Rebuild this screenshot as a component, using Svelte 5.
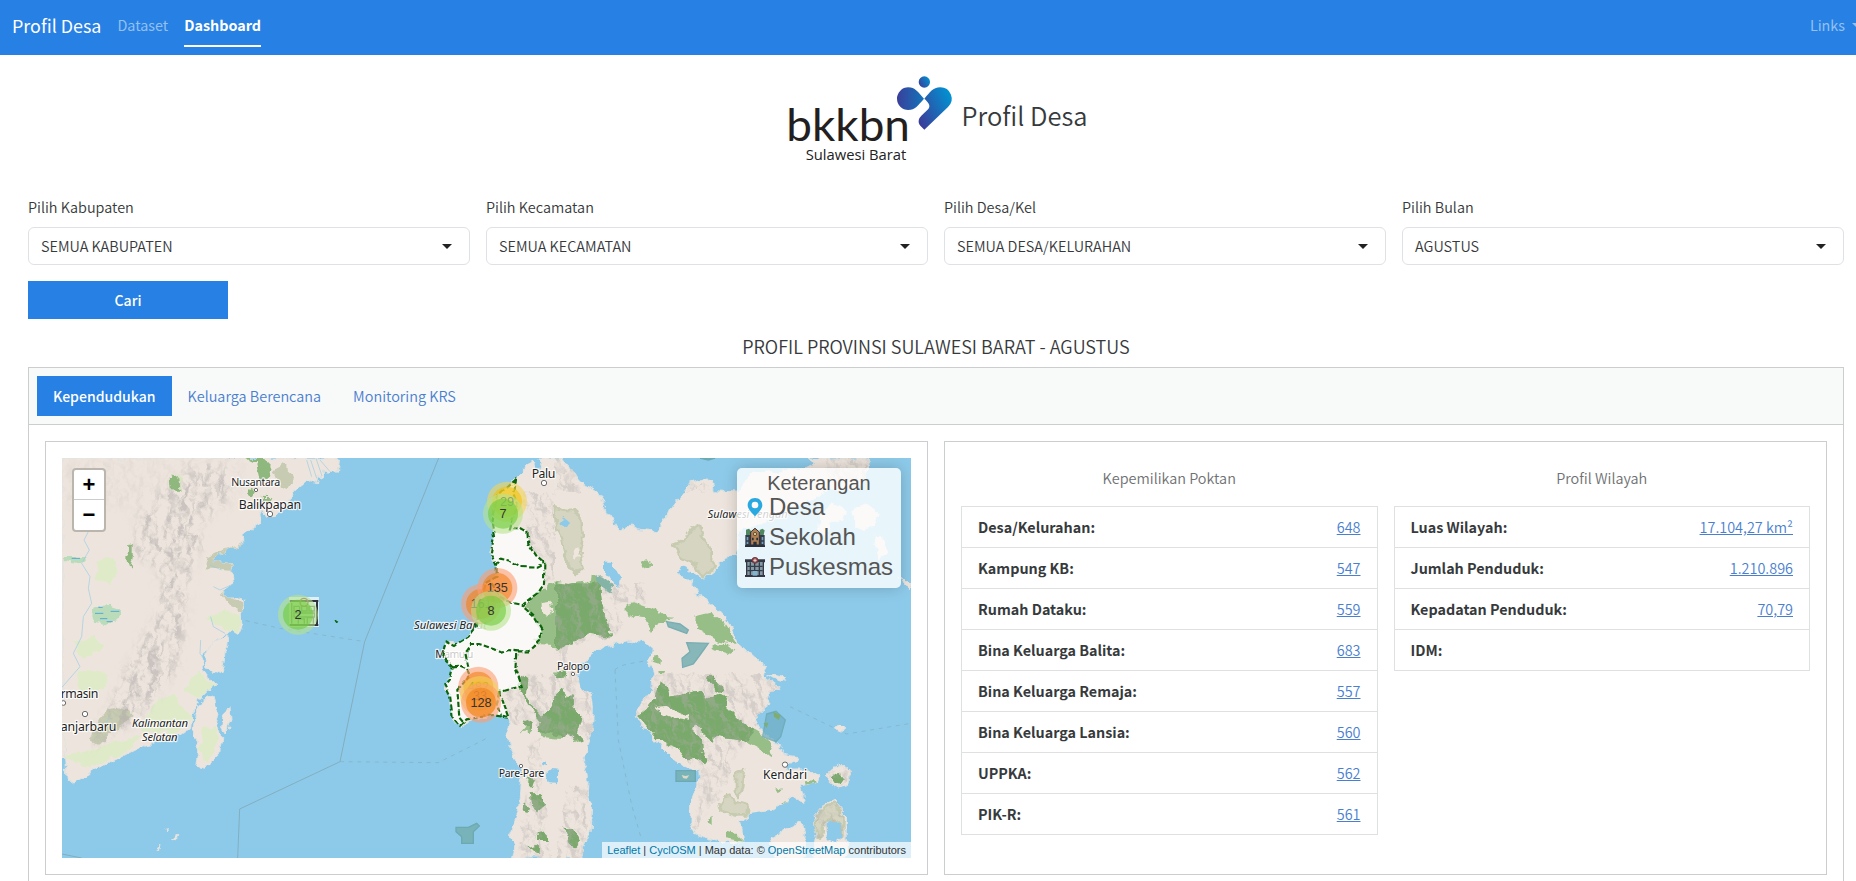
<script>
  const filters = [
    ['Pilih Kabupaten', 'SEMUA KABUPATEN'],
    ['Pilih Kecamatan', 'SEMUA KECAMATAN'],
    ['Pilih Desa/Kel', 'SEMUA DESA/KELURAHAN'],
    ['Pilih Bulan', 'AGUSTUS']
  ];
  const tables = [
    { title: 'Kepemilikan Poktan', rows: [['Desa/Kelurahan:', '648'], ['Kampung KB:', '547'], ['Rumah Dataku:', '559'], ['Bina Keluarga Balita:', '683'], ['Bina Keluarga Remaja:', '557'], ['Bina Keluarga Lansia:', '560'], ['UPPKA:', '562'], ['PIK-R:', '561']] },
    { title: 'Profil Wilayah', rows: [['Luas Wilayah:', '17.104,27 km²'], ['Jumlah Penduduk:', '1.210.896'], ['Kepadatan Penduduk:', '70,79'], ['IDM:', '']] }
  ];
  const colors = {
    s: ['rgb(181,226,140)', 'rgb(110,204,57)'],
    m: ['rgb(241,211,87)', 'rgb(240,194,12)'],
    l: ['rgb(253,156,115)', 'rgb(241,128,23)']
  };
  // x, y, count, size class, text opacity
  const clusters = [
    [774, 524, 2, 's', 1],
    [1401, 185, 29, 'm', 0.9], [1389, 221, 7, 's', 1],
    [1323, 492, 161, 'l', 0.8], [1372, 444, 135, 'l', 1], [1353, 512, 8, 's', 1],
    [1315, 740, 482, 'l', 0.8], [1320, 768, 33, 'm', 0.8], [1323, 788, 128, 'l', 1]
  ];
  const kalimantan = 'M66 54H895L893 94 872 90 866 100 850 96 848 116 833 110 830 128 815 122 800 125 770 150 752 172 730 205 704 228 680 232 668 214 660 234 662 250 625 270 603 285 606 314 560 330 520 356 512 366 545 366 578 372 575 390 580 432 545 455 553 468 598 468 617 484 614 512 604 522 606 560 596 583 580 572 552 580 526 602 512 625 486 652 495 676 484 690 500 700 506 716 527 733 508 748 480 776 474 800 456 822 452 866 410 884 350 905 300 922 215 965 160 994 105 1022 82 1025 76 940 66 868Z';
  const kalIslands = 'M558 585L566 600 555 640 548 690 522 706 500 682 498 645 520 605ZM522 765L532 812 524 850 545 892 538 945 505 975 484 991 470 985 476 930 458 872 466 824 490 780ZM570 800L573 842 556 880 545 862 550 820ZM394 1197L410 1186 414 1192 402 1203ZM378 1168L386 1166 380 1173ZM356 1230L366 1222 362 1232Z';
  const sulawesi = 'M395 62L402 68 406 85 418 92 422 78 414 54H486L508 84 530 120 560 136 592 156 610 184 630 225 655 267 690 258 715 266 770 275 790 248 806 212 838 172 870 130 905 118 932 122 940 152 1010 156 1060 100 1220 85 1250 70 1220 54H1400L1410 90 1380 140 1290 150 1210 190 1120 235 1020 275 1010 345 980 348 950 382 935 408 900 412 870 396 842 375 832 398 876 425 886 440 892 472 922 480 962 517 1000 575 1015 610 1060 650 1098 678 1090 702 1115 722 1142 740 1124 756 1102 772 1110 792 1085 812 1070 840 1088 875 1112 900 1140 912 1152 944 1192 950 1185 965 1160 972 1168 990 1230 990 1258 1008 1250 1030 1200 1040 1215 1085 1195 1078 1180 1068 1160 1085 1120 1110 1055 1120 1022 1146 1032 1205 980 1208 925 1195 886 1180 870 1145 872 1095 886 1044 905 1020 902 990 850 982 812 950 784 922 752 878 728 860 706 824 730 780 755 750 760 700 745 660 758 630 735 608 680 600 610 620 562 655 530 684 540 745 575 762 580 800 578 870 562 910 552 960 565 1010 562 1060 575 1100 570 1180 550 1225 552 1254H338L345 1220 328 1184 356 1115 360 1030 370 1005 358 975 330 920 316 880 330 848 300 820 240 836 180 857 158 832 150 770 133 735 150 715 160 682 130 650 135 605 165 615 205 590 230 560 240 480 255 430 290 410 290 380 272 340 282 290 276 255 290 170 345 115Z';
  const sulIslands = 'M1300 982L1320 970 1355 1000 1345 1038 1318 1047 1290 1030 1272 1008ZM1302 1080L1340 1128 1338 1190 1346 1240 1320 1254H1240L1252 1190 1243 1130 1270 1095ZM1110 1195L1160 1165 1205 1145 1213 1170 1210 1254H1130ZM1300 870L1315 855 1335 862 1325 880ZM1260 220L1300 190 1340 210 1330 240 1290 250 1280 290 1255 280ZM1350 210L1400 195 1435 220 1420 260 1370 265ZM1420 290L1440 285 1465 340 1440 352ZM1500 405L1535 440 1525 455ZM1020 245L1030 240 1025 255ZM1100 700L1150 712 1160 724 1120 712Z';
  const province = 'M345 118L340 160 350 190 330 265 362 264 382 275 385 310 412 350 433 368 432 432 412 462 367 495 400 525 425 568 420 600 385 634 352 634 349 690 365 738 300 756 315 800 328 834 303 830 275 825 200 838 180 857 158 832 150 770 133 735 150 715 158 682 135 660 130 650 140 602 165 615 205 590 230 560 240 480 255 430 290 410 290 380 272 340 282 290 276 255 290 170Z';
  const borders = 'M290 380L300 356 330 362 360 378 410 380 433 368M275 430L300 470 330 488 367 495M205 680L196 640 215 612 240 612 265 620 285 628 305 638 325 630 352 634M158 682L180 680 205 690 212 705 190 730 172 750 178 830 195 850M300 756L290 790 303 830';
  const forests = 'M465 425L505 432 545 422 570 430 572 404 590 412 608 408 600 440 605 475 618 530 633 590 560 580 530 600 510 622 465 622 420 618 400 600 425 580 420 560 395 530 375 500 410 460ZM680 495L710 488 745 500 772 512 800 535 820 536 770 548 755 572 740 550 735 535 700 530 680 515ZM890 528L930 518 970 545 1013 612 985 608 950 600 925 585 888 565ZM935 610L980 612 1003 632 985 645 935 628ZM722 372L735 364 750 368 748 382 730 386ZM780 722L800 730 812 770 870 758 900 750 918 775 960 758 985 770 980 800 1030 850 1080 880 1118 920 1112 952 1085 930 1040 905 995 898 950 890 940 905 915 885 885 850 878 870 905 895 910 940 928 962 915 972 850 950 830 925 780 905 740 860 712 828 745 802 765 775ZM920 712L940 710 972 745 960 752 918 728ZM1212 1025L1240 1020 1258 1045 1250 1085 1228 1090 1215 1055ZM1295 1010L1310 998 1328 1012 1312 1034ZM365 705L385 720 380 760 400 800 425 830 455 800 470 765 490 745 500 780 518 760 520 800 545 830 530 880 545 900 520 910 510 880 480 900 430 895 410 870 420 850 395 800 370 760 355 735ZM370 835L395 850 390 875 362 880 378 860ZM455 695L505 690 500 712 470 715ZM395 1060L425 1060 435 1100 415 1115 400 1095ZM370 1090L390 1100 385 1115 368 1110ZM385 1010L405 1015 395 1045 380 1030ZM490 1160L520 1165 540 1200 520 1225 500 1190ZM410 1180L435 1175 440 1200 412 1200ZM385 1225L418 1215 415 1240ZM975 1175L1010 1182 1035 1205 975 1195ZM918 1150L935 1130 935 1158ZM760 645L780 650 778 672 758 665ZM772 690L792 690 790 700 774 700ZM1140 1090L1165 1085 1160 1100ZM1130 1045L1145 1045 1143 1053 1130 1056ZM1098 850L1110 848 1105 862ZM1120 820L1140 825 1135 838Z';
  const pale = 'M465 205L500 213 526 212 545 250 550 300 540 345 548 385 530 402 505 380 490 320 468 250ZM874 268L896 256 908 290 932 320 932 350 944 378 928 404 902 406 884 370 842 348 820 314 850 304ZM958 1093L985 1070 1010 1084 1046 1093 1042 1126 1000 1126 964 1113ZM1008 998L1032 988 1026 1040 1018 1071 1008 1060ZM1250 1130L1272 1102 1302 1090 1330 1130 1330 1180 1318 1150 1290 1132 1268 1158 1260 1196 1250 1180Z';
</script>

<nav>
  <span class="brand">Profil Desa</span>
  <span class="navlink">Dataset</span>
  <span class="navlink current">Dashboard</span>
  <span class="navlink links">Links <i class="caret"></i></span>
</nav>

<main>
  <header>
    <svg class="logo" width="170" height="90" viewBox="0 0 510 270">
      <defs>
        <linearGradient id="lg1" x1="0" x2="1"><stop offset="0" stop-color="#3a3f9b" /><stop offset="1" stop-color="#1274ba" /></linearGradient>
        <linearGradient id="lg2" x1="0" x2="1" y1=".8" y2=".2"><stop offset="0" stop-color="#3c3c98" /><stop offset="1" stop-color="#0093d3" /></linearGradient>
      </defs>
      <text x="4" y="204" class="wordmark" textLength="371" lengthAdjust="spacingAndGlyphs">bkkbn</text>
      <text x="62" y="260" class="region" textLength="302" lengthAdjust="spacingAndGlyphs">Sulawesi Barat</text>
      <circle cx="418" cy="27" r="17" fill="url(#lg2)" />
      <path d="M417 77C399 57 390 43 370 43A34 34 0 0 0 370 111C390 111 399 97 417 77Z" fill="url(#lg1)" />
      <path d="M418 77C435 58 443 43 466 43A34 34 0 0 1 489 102L418 170L406 158C398 148 400 137 409 128L430 108C438 98 430 88 418 77Z" fill="url(#lg2)" />
    </svg>
    <h1>Profil Desa</h1>
  </header>

  <section class="filters">
    {#each filters as [label, value]}
      <div>
        <div class="label">{label}</div>
        <div class="select"><span>{value}</span><i class="caret"></i></div>
      </div>
    {/each}
  </section>
  <button>Cari</button>
  <h2>PROFIL PROVINSI SULAWESI BARAT - AGUSTUS</h2>

  <section class="panel">
    <div class="tabs"><span class="tab active">Kependudukan</span><span class="tab">Keluarga Berencana</span><span class="tab">Monitoring KRS</span></div>
    <div class="cards">
      <div class="card">
        <div class="map">
          <svg class="canvas" viewBox="66 54 2547 1200" preserveAspectRatio="none">
            <defs>
              <filter id="relief" x="0" y="0" width="100%" height="100%">
                <feTurbulence type="fractalNoise" baseFrequency=".026 .017" numOctaves="4" seed="8" />
                <feDiffuseLighting surfaceScale="20" lighting-color="#fff" result="d"><feDistantLight azimuth="315" elevation="55" /></feDiffuseLighting>
                <feColorMatrix values="0 0 0 0 .45  0 0 0 0 .41  0 0 0 0 .41  -1.8 0 0 0 1.6" />
              </filter>
              <filter id="rough" x="-2%" y="-2%" width="104%" height="104%" color-interpolation-filters="sRGB">
                <feTurbulence type="fractalNoise" baseFrequency=".035" numOctaves="3" seed="3" result="n" />
                <feDisplacementMap in="SourceGraphic" in2="n" scale="26" xChannelSelector="R" yChannelSelector="G" />
              </filter>
              <filter id="wavy" x="-5%" y="-5%" width="110%" height="110%" color-interpolation-filters="sRGB">
                <feTurbulence type="fractalNoise" baseFrequency=".025" numOctaves="1" seed="5" result="n" />
                <feDisplacementMap in="SourceGraphic" in2="n" scale="18" xChannelSelector="R" yChannelSelector="G" />
              </filter>
              <filter id="soft"><feGaussianBlur stdDeviation="14" /></filter>
              <clipPath id="kal"><path d={kalimantan} /></clipPath>
              <clipPath id="sul"><path d={sulawesi} /><path d={sulIslands} /></clipPath>
              <mask id="ridgesK"><g fill="#fff" filter="url(#soft)"><path d="M480 60L540 90 600 130 560 180 490 240 480 330 440 440 440 560 410 690 330 790 280 850 180 900 150 930 220 770 280 640 350 530 360 400 280 330 300 210 400 140Z" /><path opacity=".25" d="M66 54H620L560 220 66 200Z" /></g></mask>
              <mask id="ridgesS"><path fill="#fff" d="M370 156H465V420L435 430 430 370 385 310ZM465 54H480L560 136 540 156H465ZM465 430H600L740 430V490H465ZM465 490H640L680 540 640 590 465 625ZM465 610H505L500 700H580V900H520L440 880 330 850 310 760 360 703H465ZM760 703H1100L1150 745 1080 850 1000 960 970 1050 880 1180 905 990 780 905 706 824ZM385 900H420V960L450 1254H360L370 1090 385 1050ZM500 1040H560V1254H470ZM870 130H935V152H860ZM1270 54H1400V120H1290ZM1245 1090H1340V1190H1245ZM1270 970H1355V1045H1270Z" /></mask>
            </defs>
            <rect x="66" y="54" width="2547" height="1200" fill="#8dcae9" />
            <path class="sea" d="M1196 54L974 605 900 965 599 1107 593 1254M66 1242L125 1254" />
            <path class="sea faint" d="M617 542L720 565 974 605M900 965L1195 968 1340 895M1725 690C1740 670 1790 670 1825 660M1725 690L1735 900 1775 1095 1805 1200M2250 800L2420 882 2613 850" />
            <rect x="66" y="54" width="500" height="140" fill="#ede5dd" />
            <rect x="66" y="54" width="12" height="900" fill="#ede5dd" />
            <g filter="url(#rough)">
              <g class="land"><path d={kalimantan} /><path d={kalIslands} /></g>
              <g clip-path="url(#kal)">
                <path fill="#dfeac9" d="M170 370L215 350 240 390 210 430 170 420ZM470 690L500 720 525 735 480 770 430 750ZM110 690L205 700 190 750 120 770ZM100 610L160 590 190 620 130 660ZM340 790L400 760 430 810 460 830 400 880 300 870ZM490 530L560 510 605 530 595 580 550 565ZM70 950L180 920 310 880 260 935 150 985ZM410 100L430 105 420 150 400 150Z" />
                <path fill="#c6cbb1" d="M505 352L540 335 605 312 600 325 540 352 580 370 575 392 495 388ZM545 460L590 475 617 490 608 520 565 500ZM700 95L725 70 765 105 740 150 720 140ZM205 810L240 802 285 825 205 885 175 915 150 900 180 840Z" />
                <path fill="#8fb87e" d="M615 54H670L695 80 690 112 660 125 648 70ZM620 145L650 150 635 172 615 160ZM665 170L697 172 690 185 668 182ZM392 112L415 108 418 150 395 148ZM265 308H278V350L268 390 262 355Z" />
                <path fill="#badcbb" d="M155 505L205 488 250 510 245 535 200 553 165 545ZM74 354L130 354 132 372 74 363Z" />
                <g mask="url(#ridgesK)"><rect x="-50" y="-100" width="1100" height="1250" filter="url(#relief)" opacity=".6" transform="rotate(25 350 450)" /></g>
              </g>
              <path fill="#dfeac9" d="M490 850L530 870 530 925 500 965 480 930Z" />
            </g>
            <path class="river" d="M145 275L132 300 148 330 125 370 150 410 145 445 155 490 130 530 125 590 100 640 120 680 66 742M555 580L520 560 512 530M490 655L480 640 482 600M580 432L540 450 520 440M545 390L510 375M800 60L815 110M812 60L830 115M828 55L846 108M840 60L870 95M210 830L190 860" />
            <path class="river marsh" d="M95 355H120M165 520H190M212 514H238M175 502H188M200 545H218M180 536H202" />

            <g transform="translate(1080)">
              <g filter="url(#rough)">
                <g class="land"><path d={sulawesi} /><path d={sulIslands} /></g>
                <g clip-path="url(#sul)">
                  <path d={forests} fill="#96be86" />
                  <path d={pale} fill="#d6d5c1" stroke="#c7cbb0" stroke-width="8" stroke-linejoin="round" />
                  <g mask="url(#ridgesS)">
                    <path d={forests} fill="#79a96b" />
                    <rect x="120" y="54" width="1430" height="1200" filter="url(#relief)" opacity=".42" />
                  </g>
                  <path fill="#84b4a5" d="M585 410L605 405 625 420 640 440 630 460 600 440Z" />
                </g>
                <path fill="#8dcae9" d="M612 368H640L642 380 660 410 655 445 640 430 612 385ZM478 240L492 230 505 240 495 262 480 252ZM440 1000L452 990 472 992 468 1030 445 1025ZM425 965H438V980L428 978ZM1280 1155L1290 1140 1320 1150 1330 1185 1300 1210 1280 1200Z" />
                <path fill="#efe6dd" d="M518 330L532 325 540 350 520 360ZM425 490L455 485 460 512 440 530 425 515ZM770 800L800 798 865 828 868 842 820 835 775 815Z" />
              </g>
              <path fill="#76afb2" stroke="#66a4aa" stroke-width="4" d="M800 545L840 552 865 570 860 580 805 560ZM860 608L925 610 900 645 880 672 848 682 846 655 870 635ZM168 1162H205L230 1150 238 1158 220 1175V1210H185V1190L168 1175ZM828 992H886V1024H828ZM900 54H945L925 60Z" opacity=".85" />
              <path fill="#6fafc4" stroke="#66a4aa" stroke-width="4" d="M1100 822L1128 814 1156 840 1142 890 1128 905 1088 890Z" opacity=".75" />
              <path fill="#7fad6f" d="M1120 815L1142 826 1136 840 1122 830ZM1090 850L1105 848 1100 864Z" />
              <path fill="#ddd9c5" d="M845 1005L856 1008 868 1006 860 1016 850 1015Z" />
            </g>

            <g class="place">
              <text x="574" y="137" textLength="147" font-size="32">Nusantara</text>
              <text x="596" y="206" textLength="187" font-size="37">Balikpapan</text>
              <text x="62" y="775" textLength="113" font-size="37">rmasin</text>
              <text x="62" y="873" textLength="167" font-size="37">anjarbaru</text>
              <text class="it" x="276" y="861" textLength="168" font-size="34">Kalimantan</text>
              <text class="it" x="306" y="903" textLength="107" font-size="34">Selatan</text>
              <text x="1475" y="113" textLength="71" font-size="37">Palu</text>
              <text x="1551" y="691" textLength="97" font-size="32">Palopo</text>
              <text x="1376" y="1011" textLength="137" font-size="32">Pare-Pare</text>
              <text x="2169" y="1016" textLength="132" font-size="36">Kendari</text>
              <text class="it" x="2003" y="234" textLength="240" font-size="33">Sulawesi Tengah</text>
              <text class="it" x="1122" y="566" textLength="218" font-size="34">Sulawesi Barat</text>
              <text x="1186" y="655" textLength="114" font-size="32">Mamuju</text>
            </g>
            <g fill="#fff" stroke="#6b6b6b" stroke-width="3">
              <circle cx="648" cy="150" r="5" /><circle cx="690" cy="222" r="8" /><circle cx="135" cy="822" r="8" /><circle cx="70" cy="789" r="7" /><circle cx="1512" cy="129" r="8" /><circle cx="1599" cy="702" r="5" /><circle cx="1443" cy="978" r="5" /><circle cx="2235" cy="974" r="8" />
            </g>

            <g transform="translate(1080)" filter="url(#wavy)">
              <path d={province} fill="#fff" fill-opacity=".75" stroke="#0a650a" stroke-width="6.5" stroke-dasharray="16 7" />
              <path d={borders} fill="none" stroke="#0a650a" stroke-width="6.5" stroke-dasharray="16 7" />
            </g>
            <path d="M885 541L893 545 890 549Z" fill="#0a650a" stroke="#0a650a" stroke-width="3" />

            <g transform="translate(747 471)" fill="none" stroke="#30323b" stroke-width="4">
              <rect width="90" height="90" fill="#fff" fill-opacity=".72" stroke="none" />
              <path stroke-width="6" d="M2 12H88M84 12V82M2 84H88" />
              <path stroke="#777b80" d="M8 18V80M15 28H32V42H15ZM38 28H54V42H38ZM60 28H76V42H60ZM15 48H76V60H15ZM28 80V66H46V80M55 80V62H73V80" />
              <circle cx="45" cy="16" r="12" stroke="#a34c44" />
            </g>

            {#each clusters as [x, y, count, size, alpha]}
              <circle cx={x} cy={y} r="60" fill={colors[size][0]} fill-opacity=".6" />
              <circle cx={x} cy={y} r="45" fill={colors[size][1]} fill-opacity=".6" />
              <text x={x} y={y + 12} class="count" fill-opacity={alpha}>{count}</text>
            {/each}
          </svg>

          <div class="zoomer"><span>+</span><span>−</span></div>
          <div class="legend">
            <div class="ltitle">Keterangan</div>
            <div class="lrow"><svg width="20" height="20" viewBox="0 0 60 60"><path fill="#2aa9e0" fill-rule="evenodd" d="M30 3C16 3 8 13 8 25C8 36 20 47 30 58C40 47 52 36 52 25C52 13 44 3 30 3ZM30 14A10 10 0 1 1 30 34A10 10 0 1 1 30 14Z" /></svg>Desa</div>
            <div class="lrow"><svg width="20" height="20" viewBox="0 0 60 60"><path fill="#4e8760" d="M3 8L12 5 18 12V24H3ZM44 9L52 5 59 10 56 24H44Z" /><path fill="#343b49" d="M1 24H59V59H1Z" /><path fill="#b38051" stroke="#2c2e38" stroke-width="3" d="M17 54V15L30 4 43 15V54Z" /><path fill="#71a1bf" d="M5 30H10V40H5ZM50 30H55V40H50ZM5 44H10V51H5ZM50 44H55V51H50Z" /><circle cx="30" cy="21" r="5" fill="#e3c37c" stroke="#2c2e38" stroke-width="2" /><path fill="#27303b" d="M21 32H26V40H21ZM34 32H39V40H34ZM25 44H35V56H25ZM0 55H60V60H0Z" /></svg>Sekolah</div>
            <div class="lrow"><svg width="20" height="20" viewBox="0 0 60 60"><path fill="#343844" d="M0 7H60V16H57V54H60V60H0V54H3V16H0Z" /><path fill="#8798a5" d="M7 15H53V54H7Z" /><path stroke="#343e4b" stroke-width="4" d="M16 16V54M29 16V54M43 16V54M7 28H53M7 41H53" /><path fill="#82b5ce" d="M23 42H37V56H23Z" /><circle cx="30" cy="10" r="9" fill="#9f4546" stroke="#4b3037" stroke-width="2" /><path stroke="#ddd" stroke-width="3" d="M30 5V15M25 10H35" /></svg>Puskesmas</div>
          </div>
          <div class="credit"><a href="#leaflet">Leaflet</a> | <a href="#cyclosm">CyclOSM</a> | Map data: © <a href="#osm">OpenStreetMap</a> contributors</div>
        </div>
      </div>

      <div class="card stats">
        {#each tables as table}
          <div class="stat">
            <h3>{table.title}</h3>
            <div class="rows">
              {#each table.rows as [name, value]}
                <div class="row"><b>{name}</b>{#if value}<a href="#detail">{value}</a>{/if}</div>
              {/each}
            </div>
          </div>
        {/each}
      </div>
    </div>
  </section>
</main>

<style>
  :global(body) { margin: 0; overflow: hidden; background: #fff; }
  :global(#app) { font: 350 14.45px/24px "Noto Sans CJK SC", "Open Sans", sans-serif; color: #373a3c; width: 1856px; height: 881px; overflow: hidden; }
  nav { height: 55px; box-sizing: border-box; background: #2780e3; color: #fff; display: flex; align-items: flex-start; padding: 8px 0 0 12px; gap: 16px; overflow: hidden; font-size: 14.35px; }
  .brand { font-size: 17.9px; line-height: 35px; white-space: nowrap; font-weight: 400; }
  .navlink { line-height: 34px; color: #93c0f1; white-space: nowrap; font-weight: 400; }
  .current { color: #fff; font-weight: 700; height: 37px; border-bottom: 2px solid #fff; }
  .links { margin-left: auto; margin-right: -6px; display: flex; align-items: center; gap: 7px; }
  .caret { width: 0; height: 0; border: 5px solid transparent; border-top-color: currentColor; border-bottom: 0; flex: none; }
  main { padding: 0 12px 0 28px; }
  header { height: 139px; box-sizing: border-box; padding-top: 18px; display: flex; justify-content: center; align-items: flex-start; gap: 7px; }
  .logo { flex: none; }
  .wordmark { font-family: Lato, sans-serif; font-size: 132px; font-weight: 400; fill: #231f20; }
  .region { font-family: "Open Sans", sans-serif; font-size: 43px; font-weight: 400; fill: #222; }
  h1 { font-size: 25.5px; line-height: 36px; font-weight: 350; margin: 24px 0 0; white-space: nowrap; }
  .filters { display: grid; grid-template-columns: repeat(4, 1fr); gap: 16px; }
  .label { line-height: 24px; margin: 1px 0 8px; }
  .select { height: 38px; box-sizing: border-box; border: 1px solid #dee2e6; border-radius: 6px; padding: 0 17px 0 12px; display: flex; align-items: center; justify-content: space-between; }
  .filters .caret { color: #222; }
  button { display: block; width: 200px; height: 38px; margin-top: 16px; border: 0; background: #2780e3; color: #fff; font: 500 14.1px "Noto Sans CJK SC", sans-serif; padding: 0; }
  h2 { margin: 12px 0 5px; text-align: center; font-size: 18.05px; line-height: 31px; font-weight: 350; }
  .panel { border: 1px solid #cbcdce; border-bottom: 0; height: 514px; box-sizing: border-box; }
  .tabs { height: 56px; box-sizing: content-box; border-bottom: 1px solid #cbcdce; background: #f8f9f9; display: flex; padding-left: 8px; align-items: center; }
  .tab { padding: 0 16px; height: 40px; line-height: 40px; color: #4a7fd0; }
  .active { background: #2780e3; color: #fff; font-weight: 500; font-size: 14.05px; }
  .cards { padding: 16px; display: grid; grid-template-columns: 1fr 1fr; gap: 16px; }
  .card { border: 1px solid #cbcdce; box-sizing: border-box; height: 434px; padding: 16px; min-width: 0; }
  .map { position: relative; height: 400px; overflow: hidden; font-family: "Liberation Sans", Arial, sans-serif; font-weight: 400; }
  .canvas { display: block; width: 100%; height: 400px; }
  .land { fill: #ede5dd; stroke: #e0e1df; stroke-width: 3; }
  .sea { fill: none; stroke: #83aebe; stroke-width: 3; }
  .faint { stroke-width: 2; stroke-dasharray: 12 14; }
  .river { fill: none; stroke: #9acbe2; stroke-width: 2; }
  .marsh { stroke: #55a9d8; stroke-width: 3; }
  .place { font-family: "Noto Sans", sans-serif; fill: #222; stroke: #fff; stroke-width: 7px; stroke-linejoin: round; stroke-opacity: .8; paint-order: stroke; }
  .it { font-style: italic; }
  .count { font-family: "Liberation Sans", Arial, sans-serif; font-size: 38px; text-anchor: middle; fill: #333; }
  .zoomer { position: absolute; left: 10px; top: 10px; border: 2px solid #bbb6ad; border-radius: 4px; overflow: hidden; background: #fff; }
  .zoomer span { display: block; box-sizing: border-box; width: 30px; height: 30px; text-align: center; color: #000; font: bold 22px/29px "Liberation Sans", sans-serif; }
  .zoomer span:first-child { border-bottom: 1px solid #ccc; }
  .legend { position: absolute; right: 10px; top: 10px; width: 164px; height: 120px; box-sizing: border-box; padding: 4px 8px; border-radius: 5px; background: rgba(255,255,255,.8); box-shadow: 0 0 15px rgba(0,0,0,.2); color: #555; }
  .ltitle { font-size: 20px; line-height: 22px; text-align: center; }
  .lrow { display: flex; align-items: center; gap: 4px; font-size: 24px; height: 30px; line-height: 30px; white-space: nowrap; }
  .lrow:nth-child(2) { height: 26px; margin-bottom: 2px; }
  .lrow svg { flex: none; }
  .credit { position: absolute; right: 0; bottom: 0; padding: 0 5px; background: rgba(255,255,255,.7); font-size: 11px; line-height: 16px; color: #333; white-space: nowrap; }
  .credit a { color: #0078a8; text-decoration: none; }
  .stats { display: grid; grid-template-columns: 1fr 1fr; gap: 16px; }
  h3 { margin: 7px 0 16px; text-align: center; font-size: 14.45px; font-weight: 350; line-height: 25px; color: #6f7274; }
  .rows { border: 1px solid #dfe0e1; border-bottom: 0; }
  .row { height: 40px; border-bottom: 1px solid #dfe0e1; padding: 0 16px; display: flex; align-items: center; justify-content: space-between; }
  .row b { font-weight: 700; font-size: 14.35px; }
  .row a { color: #4a7fd0; text-decoration: underline; }
</style>
